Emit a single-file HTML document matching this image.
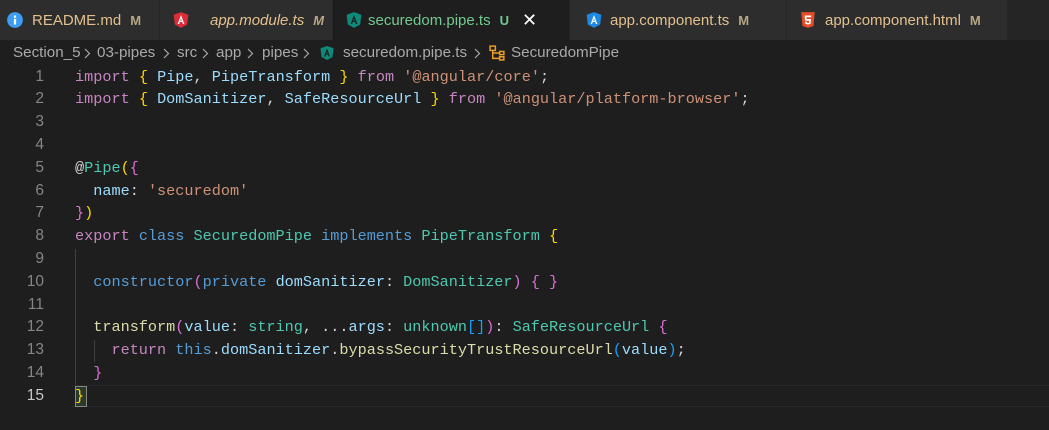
<!DOCTYPE html>
<html><head><meta charset="utf-8"><style>
*{margin:0;padding:0;box-sizing:border-box}
body{width:1049px;height:427px;background:#1e1e1e;overflow:hidden;font-family:"Liberation Sans",sans-serif;position:relative}
.tabs{position:absolute;left:0;top:0;width:1049px;height:40px;background:#252526;display:flex}
.tab{height:40px;background:#2d2d2d;border-right:1px solid #252526;display:flex;align-items:center;font-size:15px;color:#e2c08d;position:relative}
.tab.act{background:#1e1e1e;color:#73c991}
.m{font-weight:bold;color:#b8a785;font-size:13px;margin-left:9px}
.ico{position:absolute;top:11px;width:18px;height:18px}
.bc{position:absolute;top:40px;left:0;height:26px;width:100%;font-size:15.2px;color:#a9a9a9}
.bc span,.bc svg{position:absolute;top:4px;white-space:pre}
.bc svg.ch{top:8px}
.code{position:absolute;top:65.6px;left:0;font-family:"Liberation Mono",monospace;font-size:15.2px;line-height:22.8px;white-space:pre}
.ln{position:absolute;left:0;width:44px;text-align:right;color:#858585;font-family:"Liberation Sans",sans-serif;font-size:15.5px}
.l{position:absolute;left:75px;color:#d4d4d4}
.k{color:#c586c0}.b{color:#569cd6}.t{color:#4ec9b0}.v{color:#9cdcfe}.s{color:#ce9178}.f{color:#dcdcaa}.y{color:#ffd700}.p{color:#da70d6}.q{color:#179fff}
</style></head><body>
<div class="tabs">
 <div class="tab" style="width:160px;padding-left:32px"><svg class="ico" style="left:6px" viewBox="0 0 16 16"><circle cx="8" cy="8" r="7" fill="#3d9df3"/><rect x="7" y="7" width="2" height="5" fill="#fff"/><rect x="7" y="4" width="2" height="2" fill="#fff"/></svg>README.md<span class="m">M</span></div>
 <div class="tab" style="width:173px;padding-left:50px;font-style:italic"><svg class="ico" style="left:12px" viewBox="0 0 16 16"><path d="M8 1L1.5 3.3 2.5 12 8 15 13.5 12 14.5 3.3Z" fill="#dd2c37"/><path d="M8 3.5L5 11.5h1.3l.6-1.7h2.2l.6 1.7H11ZM7.3 8.7L8 6.5l.7 2.2Z" fill="#fff"/></svg>app.module.ts<span class="m" style="font-style:italic">M</span></div>
 <div class="tab act" style="width:237px;padding-left:35px"><svg class="ico" style="left:12px" viewBox="0 0 16 16"><path d="M8 1L1.5 3.3 2.5 12 8 15 13.5 12 14.5 3.3Z" fill="#0e8a79"/><path d="M8 3.5L5 11.5h1.3l.6-1.7h2.2l.6 1.7H11ZM7.3 8.7L8 6.5l.7 2.2Z" fill="#1e1e1e"/></svg>securedom.pipe.ts<span class="m" style="color:#73c991">U</span><span style="color:#fff;margin-left:13px;font-size:18px">✕</span></div>
 <div class="tab" style="width:217px;padding-left:40px"><svg class="ico" style="left:15px" viewBox="0 0 16 16"><path d="M8 1L1.5 3.3 2.5 12 8 15 13.5 12 14.5 3.3Z" fill="#1e88e5"/><path d="M8 3.5L5 11.5h1.3l.6-1.7h2.2l.6 1.7H11ZM7.3 8.7L8 6.5l.7 2.2Z" fill="#fff"/></svg>app.component.ts<span class="m">M</span></div>
 <div class="tab" style="width:221px;padding-left:38px"><svg class="ico" style="left:12px" viewBox="0 0 16 16"><path d="M2 1h12l-1.1 12.3L8 15l-4.9-1.7Z" fill="#e44d26"/><path d="M5 4h6l-.2 1.5H6.6l.1 1.6h4l-.4 4.3L8 12l-2.3-.6-.2-1.8H7l.1.8L8 10.6l.9-.3.1-1.6H5.3Z" fill="#fff"/></svg>app.component.html<span class="m">M</span></div>
</div>
<div class="bc">
<span style="left:13px">Section_5</span>
<svg class="ch" style="left:84px" width="7" height="11" viewBox="0 0 7 11"><path d="M1 1l4.5 4.5L1 10" fill="none" stroke="#a9a9a9" stroke-width="1.2"/></svg>
<span style="left:97px">03-pipes</span>
<svg class="ch" style="left:163px" width="7" height="11" viewBox="0 0 7 11"><path d="M1 1l4.5 4.5L1 10" fill="none" stroke="#a9a9a9" stroke-width="1.2"/></svg>
<span style="left:177px">src</span>
<svg class="ch" style="left:202px" width="7" height="11" viewBox="0 0 7 11"><path d="M1 1l4.5 4.5L1 10" fill="none" stroke="#a9a9a9" stroke-width="1.2"/></svg>
<span style="left:216px">app</span>
<svg class="ch" style="left:247px" width="7" height="11" viewBox="0 0 7 11"><path d="M1 1l4.5 4.5L1 10" fill="none" stroke="#a9a9a9" stroke-width="1.2"/></svg>
<span style="left:262px">pipes</span>
<svg class="ch" style="left:303px" width="7" height="11" viewBox="0 0 7 11"><path d="M1 1l4.5 4.5L1 10" fill="none" stroke="#a9a9a9" stroke-width="1.2"/></svg>
<svg style="left:319px;top:5px" width="16" height="16" viewBox="0 0 16 16"><path d="M8 1L1.5 3.3 2.5 12 8 15 13.5 12 14.5 3.3Z" fill="#0e8a79"/><path d="M8 3.5L5 11.5h1.3l.6-1.7h2.2l.6 1.7H11ZM7.3 8.7L8 6.5l.7 2.2Z" fill="#1e1e1e"/></svg>
<span style="left:343px">securedom.pipe.ts</span>
<svg class="ch" style="left:474px" width="7" height="11" viewBox="0 0 7 11"><path d="M1 1l4.5 4.5L1 10" fill="none" stroke="#a9a9a9" stroke-width="1.2"/></svg>
<svg style="left:489px;top:4px" width="17" height="17" viewBox="0 0 16 16"><g fill="none" stroke="#ee9d28" stroke-width="1.4"><rect x="1" y="2" width="5" height="4"/><rect x="10" y="7" width="4" height="3"/><rect x="10" y="12" width="4" height="3"/><path d="M3.5 6v7.5H10M3.5 8.5H10"/></g></svg>
<span style="left:511px">SecuredomPipe</span>
</div>
<div style="position:absolute;left:72px;top:385px;width:977px;height:22px;border-top:1px solid #282828;border-bottom:1px solid #282828"></div>
<div style="position:absolute;left:75px;top:249px;width:1px;height:136px;background:#404040"></div>
<div style="position:absolute;left:94px;top:340px;width:1px;height:22px;background:#404040"></div>
<div style="position:absolute;left:75px;top:386px;width:12px;height:21px;border:1px solid #888;background:#2a3a2a"></div>
<div class="code">
<div class="ln" style="top:0">1</div><div class="l" style="top:0"><span class="k">import</span> <span class="y">{</span> <span class="v">Pipe</span>, <span class="v">PipeTransform</span> <span class="y">}</span> <span class="k">from</span> <span class="s">'@angular/core'</span>;</div>
<div class="ln" style="top:22.8px">2</div><div class="l" style="top:22.8px"><span class="k">import</span> <span class="y">{</span> <span class="v">DomSanitizer</span>, <span class="v">SafeResourceUrl</span> <span class="y">}</span> <span class="k">from</span> <span class="s">'@angular/platform-browser'</span>;</div>
<div class="ln" style="top:45.6px">3</div>
<div class="ln" style="top:68.4px">4</div>
<div class="ln" style="top:91.2px">5</div><div class="l" style="top:91.2px">@<span class="t">Pipe</span><span class="y">(</span><span class="p">{</span></div>
<div class="ln" style="top:114px">6</div><div class="l" style="top:114px">  <span class="v">name</span>: <span class="s">'securedom'</span></div>
<div class="ln" style="top:136.8px">7</div><div class="l" style="top:136.8px"><span class="p">}</span><span class="y">)</span></div>
<div class="ln" style="top:159.6px">8</div><div class="l" style="top:159.6px"><span class="k">export</span> <span class="b">class</span> <span class="t">SecuredomPipe</span> <span class="b">implements</span> <span class="t">PipeTransform</span> <span class="y">{</span></div>
<div class="ln" style="top:182.4px">9</div>
<div class="ln" style="top:205.2px">10</div><div class="l" style="top:205.2px">  <span class="b">constructor</span><span class="p">(</span><span class="b">private</span> <span class="v">domSanitizer</span>: <span class="t">DomSanitizer</span><span class="p">)</span> <span class="p">{</span> <span class="p">}</span></div>
<div class="ln" style="top:228px">11</div>
<div class="ln" style="top:250.8px">12</div><div class="l" style="top:250.8px">  <span class="f">transform</span><span class="p">(</span><span class="v">value</span>: <span class="t">string</span>, ...<span class="v">args</span>: <span class="t">unknown</span><span class="q">[]</span><span class="p">)</span>: <span class="t">SafeResourceUrl</span> <span class="p">{</span></div>
<div class="ln" style="top:273.6px">13</div><div class="l" style="top:273.6px">    <span class="k">return</span> <span class="b">this</span>.<span class="v">domSanitizer</span>.<span class="f">bypassSecurityTrustResourceUrl</span><span class="q">(</span><span class="v">value</span><span class="q">)</span>;</div>
<div class="ln" style="top:296.4px">14</div><div class="l" style="top:296.4px">  <span class="p">}</span></div>
<div class="ln" style="top:319.2px;color:#c6c6c6">15</div><div class="l" style="top:319.2px"><span class="y">}</span></div>
</div>
</body></html>
